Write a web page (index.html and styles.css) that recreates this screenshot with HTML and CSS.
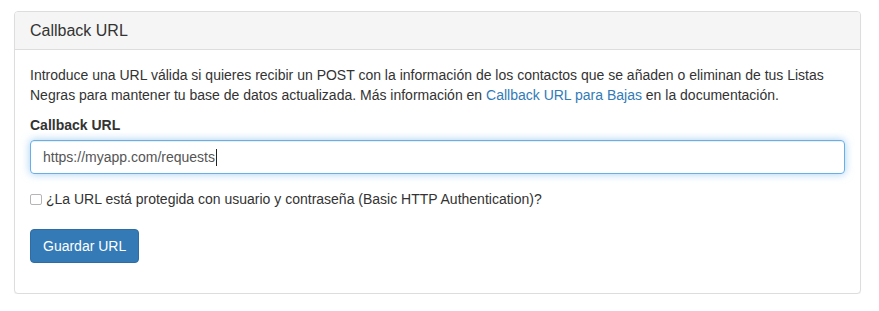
FILE: index.html
```html
<!DOCTYPE html>
<html lang="es">
<head>
<meta charset="utf-8">
<title>Callback URL</title>
<link rel="stylesheet" href="styles.css">
</head>
<body>
<div class="page">
  <div class="panel">
    <div class="panel-heading">
      <h3 class="panel-title">Callback URL</h3>
    </div>
    <div class="panel-body">
      <p class="intro">Introduce una URL válida si quieres recibir un POST con la información de los contactos que se añaden o eliminan de tus Listas Negras para mantener tu base de datos actualizada. Más información en <a href="#" class="link">Callback URL para Bajas</a> en la documentación.</p>
      <div class="form-group">
        <label class="control-label">Callback URL</label>
        <div class="form-control focused"><span class="value">https://myapp.com/requests</span><span class="caret"></span></div>
      </div>
      <div class="checkbox">
        <label class="check-label"><input type="checkbox" class="check"><span>¿La URL está protegida con usuario y contraseña (Basic HTTP Authentication)?</span></label>
      </div>
      <div class="form-actions">
        <button type="button" class="btn btn-primary">Guardar URL</button>
      </div>
    </div>
  </div>
</div>
</body>
</html>
```

FILE: styles.css
```css
* { box-sizing: border-box; }
html, body { margin: 0; padding: 0; background: #fff; }
body {
  font-family: "Liberation Sans", Arial, Helvetica, sans-serif;
  font-size: 14px;
  line-height: 20px;
  color: #333;
}
.page { padding: 11px 18px 0 14px; }
.panel {
  border: 1px solid #ddd;
  border-radius: 4px;
  background: #fff;
  box-shadow: 0 1px 1px rgba(0,0,0,.05);
}
.panel-heading {
  background: #f5f5f5;
  border-bottom: 1px solid #ddd;
  border-radius: 3px 3px 0 0;
  padding: 10px 15px;
}
.panel-title {
  margin: 0;
  font-size: 16px;
  font-weight: 500;
  line-height: 17px;
  color: #333;
}
.panel-body { padding: 15px; }
.intro { margin: 0 0 10px; }
.link { color: #337ab7; text-decoration: none; }
.form-group { margin-bottom: 15px; }
.control-label {
  display: block;
  font-weight: bold;
  margin-bottom: 5px;
}
.form-control {
  display: flex;
  align-items: center;
  height: 34px;
  padding: 6px 12px;
  border: 1px solid #ccc;
  border-radius: 4px;
  color: #555;
  font-size: 14px;
}
.form-control.focused {
  border-color: #66afe9;
  box-shadow: inset 0 1px 1px rgba(0,0,0,.075), 0 0 8px rgba(102,175,233,.6);
}
.caret {
  display: inline-block;
  width: 1px;
  height: 17px;
  background: #222;
  margin-left: 1px;
}
.checkbox { margin: 0 0 20px; }
.check-label {
  display: flex;
  align-items: center;
  gap: 4px;
  font-weight: normal;
}
.check {
  appearance: none;
  -webkit-appearance: none;
  margin: 0;
  width: 12px;
  height: 11px;
  border: 1px solid #b5b5b5;
  border-radius: 2px;
  background: #fff;
}
.form-actions { margin-bottom: 15px; display: flex; }
.btn {
  font-family: inherit;
  font-size: 14px;
  line-height: 20px;
  padding: 6px 12px;
  border-radius: 4px;
  border: 1px solid transparent;
  cursor: pointer;
}
.btn-primary {
  background: #337ab7;
  border-color: #2e6da4;
  color: #fff;
}
```
